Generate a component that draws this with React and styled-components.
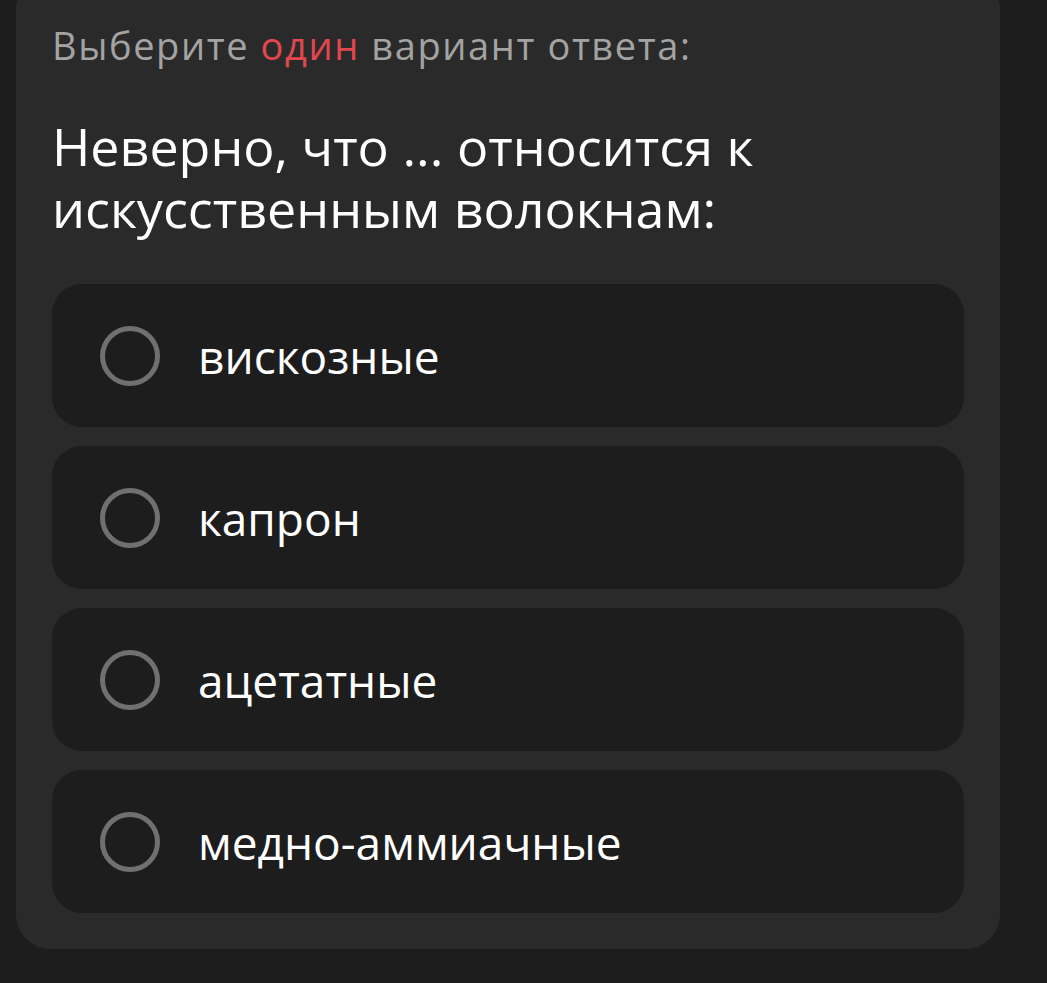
import React from "react";
import styled, { createGlobalStyle } from "styled-components";

const Global = createGlobalStyle`
  html, body { margin: 0; padding: 0; background: #1d1d1d; }
  body { font-family: "Open Sans", "Noto Sans", sans-serif; overflow: hidden; }
`;

const Page = styled.div`
  width: 1047px;
  height: 983px;
  padding: 0 47px 0 16px;
  box-sizing: border-box;
`;

const Card = styled.section`
  margin-top: -24px;
  background: #2a2a2a;
  border-radius: 34px;
  padding: 45px 36px 36px 36px;
  display: flex;
  flex-direction: column;
`;

const Hint = styled.div`
  color: #a3a3a3;
  font-size: 38px;
  line-height: 48px;
  font-weight: 400;
  letter-spacing: 1.6px;
`;

const Accent = styled.span`
  color: #e2474f;
`;

const Question = styled.h2`
  margin: 46px 0 45px 0;
  color: #ffffff;
  font-size: 52px;
  line-height: 62px;
  font-weight: 400;
`;

const Line = styled.span`
  display: block;
`;

const Options = styled.div`
  display: flex;
  flex-direction: column;
  gap: 19px;
`;

const Option = styled.label`
  display: flex;
  align-items: center;
  gap: 38px;
  height: 143px;
  padding: 0 48px;
  background: #1d1d1d;
  border-radius: 30px;
  box-sizing: border-box;
  cursor: pointer;
`;

const Radio = styled.span`
  flex: none;
  width: 60px;
  height: 60px;
  border-radius: 50%;
  border: 5px solid #707070;
  box-sizing: border-box;
`;

const OptionText = styled.span`
  color: #ffffff;
  font-size: 46px;
  line-height: 52px;
`;

const options = ["вискозные", "капрон", "ацетатные", "медно-аммиачные"];

export default function App() {
  return (
    <Page>
      <Global />
      <Card>
        <Hint>
          Выберите <Accent>один</Accent> вариант ответа:
        </Hint>
        <Question>
          <Line>Неверно, что ... относится к</Line>
          <Line>искусственным волокнам:</Line>
        </Question>
        <Options>
          {options.map((o) => (
            <Option key={o}>
              <Radio />
              <OptionText>{o}</OptionText>
            </Option>
          ))}
        </Options>
      </Card>
    </Page>
  );
}
